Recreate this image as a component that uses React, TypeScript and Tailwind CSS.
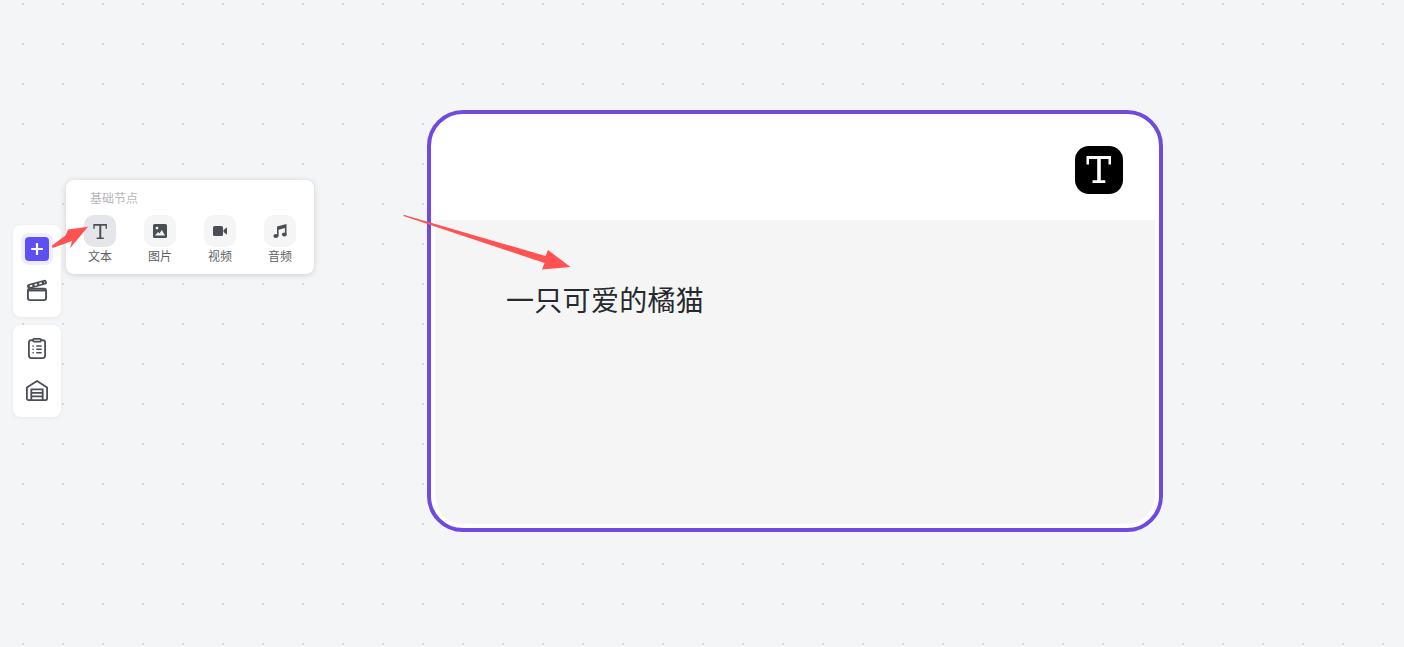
const tPath =
  "M11.500 10H36V18.500H33.500V13H25.800V34.300H30.300V37H17.500V34.300H22.200V13H14V18.500H11.500z";

const dark = "#4b4f55";

function Clapper() {
  return (
    <svg width="24" height="24" viewBox="0 0 24 24" fill="none" stroke={dark} strokeWidth="1.9" strokeLinejoin="round">
      <rect x="2.900" y="9.800" width="18.200" height="11.300" rx="2" />
      <path d="M3 11.500h18" />
      <path d="M4.500 7.400 19.500 3.300" strokeWidth="4.800" strokeLinecap="round" />
      <path d="M4.800 7.300 19.500 3.300" stroke="#fff" strokeWidth="1.700" strokeDasharray="2.600 2.300" />
    </svg>
  );
}

function Clipboard() {
  return (
    <svg width="24" height="24" viewBox="0 0 24 24" fill="none" stroke={dark} strokeWidth="1.800" strokeLinejoin="round" strokeLinecap="round">
      <rect x="3.900" y="3.200" width="16.200" height="17.900" rx="2.500" />
      <rect x="8" y="1.900" width="8" height="2.800" rx="1.200" fill="#fff" />
      <path d="M8 9h.200M8 12.300h.200M8 15.700h.200M11.800 9H16.200M11.800 12.300H16.200M11.800 15.700H16.200" strokeWidth="1.500" />
    </svg>
  );
}

function Warehouse() {
  return (
    <svg width="24" height="24" viewBox="0 0 24 24" fill="none" stroke={dark} strokeWidth="1.800" strokeLinejoin="round">
      <path d="M1.900 8.500 12 2l10.100 6.500v11a1.600 1.600 0 0 1-1.600 1.600h-17a1.600 1.600 0 0 1-1.600-1.600z" />
      <path d="M6.300 21V10.400h11.400V21M6.300 13.800h11.400M6.300 17.300h11.400" />
    </svg>
  );
}

function ImageIcon() {
  return (
    <svg width="14" height="14" viewBox="0 0 14 14">
      <path fill={dark} fillRule="evenodd" d="M1.500 0h11A1.500 1.500 0 0 1 14 1.500v11a1.500 1.500 0 0 1-1.500 1.500h-11A1.500 1.500 0 0 1 0 12.500v-11A1.500 1.500 0 0 1 1.500 0zM2 11.500h10L8.800 6 6.500 9.500 5 8zM4 5.500a1.400 1.400 0 1 0 0-2.800 1.400 1.400 0 0 0 0 2.800z" />
    </svg>
  );
}

function VideoIcon() {
  return (
    <svg width="14" height="10" viewBox="0 0 14 10">
      <rect width="10" height="10" rx="1.500" fill={dark} />
      <path d="M10.500 4 14 1.200v7.600L10.500 6z" fill={dark} />
    </svg>
  );
}

function MusicIcon() {
  return (
    <svg width="14" height="14" viewBox="0 0 14 14" fill={dark}>
      <path d="M4 2.600 13.500 0v10.800h-1.600V4L5.600 5.700v6.600H4z" />
      <ellipse cx="2.900" cy="12" rx="2.500" ry="2" />
      <ellipse cx="11.300" cy="10.600" rx="2.400" ry="2" />
    </svg>
  );
}

const items = [
  {
    label: "文本",
    icon: (
      <svg width="14" height="15" viewBox="11 10 25 27">
        <path d={tPath} fill={dark} />
      </svg>
    ),
    active: true,
  },
  { label: "图片", icon: <ImageIcon />, active: false },
  { label: "视频", icon: <VideoIcon />, active: false },
  { label: "音频", icon: <MusicIcon />, active: false },
];

export default function App() {
  return (
    <div className="relative h-[647px] w-[1404px] overflow-hidden bg-[#f4f5f7] bg-[radial-gradient(circle,#d9dadd_1px,transparent_1.2px)] bg-[size:40px_40px] bg-[position:3px_-16px] font-['Liberation_Sans','Noto_Sans_CJK_SC',sans-serif]">
      <div className="absolute left-[13px] top-[225px] flex flex-col gap-2">
        <div className="flex h-[92px] w-12 flex-col items-center rounded-lg bg-white pt-2 shadow-[0_1px_4px_rgba(0,0,0,0.06)]">
          <div className="flex h-8 w-8 items-center justify-center rounded-lg bg-[#efecff]">
            <div className="flex h-6 w-6 items-center justify-center rounded bg-[#5b4ff5]">
              <svg width="12" height="12" viewBox="0 0 12 12" stroke="#fff" strokeWidth="2.200" strokeLinecap="round">
                <path d="M6 1v10M1 6h10" />
              </svg>
            </div>
          </div>
          <div className="mt-[14px] flex h-6 items-center">
            <Clapper />
          </div>
        </div>
        <div className="flex h-[92px] w-12 flex-col items-center gap-[18px] rounded-lg bg-white pt-3 shadow-[0_1px_4px_rgba(0,0,0,0.06)]">
          <Clipboard />
          <Warehouse />
        </div>
      </div>

      <div className="absolute left-[66px] top-[180px] h-[94px] w-[248px] rounded-lg bg-white pl-[18px] pt-[11px] shadow-[0_1px_6px_rgba(0,0,0,0.16)]">
        <div className="pl-[6px] text-xs leading-4 text-[#b5b6b8]">基础节点</div>
        <div className="mt-2 flex gap-7">
          {items.map((it) => (
            <div key={it.label} className="flex w-8 flex-col items-center">
              <div className={`flex h-8 w-8 items-center justify-center rounded-[10px] ${it.active ? "bg-[#e5e6ea]" : "bg-[#f5f5f6]"}`}>
                {it.icon}
              </div>
              <div className="mt-[2px] whitespace-nowrap text-xs leading-4 text-[#5c5f63]">{it.label}</div>
            </div>
          ))}
        </div>
      </div>

      <div className="absolute left-[427px] top-[110px] flex h-[422px] w-[736px] flex-col rounded-[36px] border-4 border-[#7049de] bg-white p-1 pt-0">
        <div className="flex h-[106px] shrink-0 justify-end pr-[32px] pt-[32px]">
          <div className="h-12 w-12 rounded-[14px] bg-black">
            <svg width="48" height="48" viewBox="0 0 48 48">
              <path d={tPath} fill="#fff" />
            </svg>
          </div>
        </div>
        <div className="flex-1 rounded-b-[28px] bg-[#f5f5f5] pl-[71px] pt-[60px] text-[28px] leading-[44px] tracking-[0.3px] text-[#26292e]">
          一只可爱的橘猫
        </div>
      </div>

      <svg className="pointer-events-none absolute left-0 top-0" width="1404" height="647" fill="#ff5252">
        <polygon points="403.500,214.800 545.500,256 548,250 570.500,267 542,269.500 544.500,263 403.500,216" />
        <polygon points="52,245.500 65.500,235.500 68,229.500 88,226.700 70,248.300 72,241 52.500,248" />
      </svg>
    </div>
  );
}
